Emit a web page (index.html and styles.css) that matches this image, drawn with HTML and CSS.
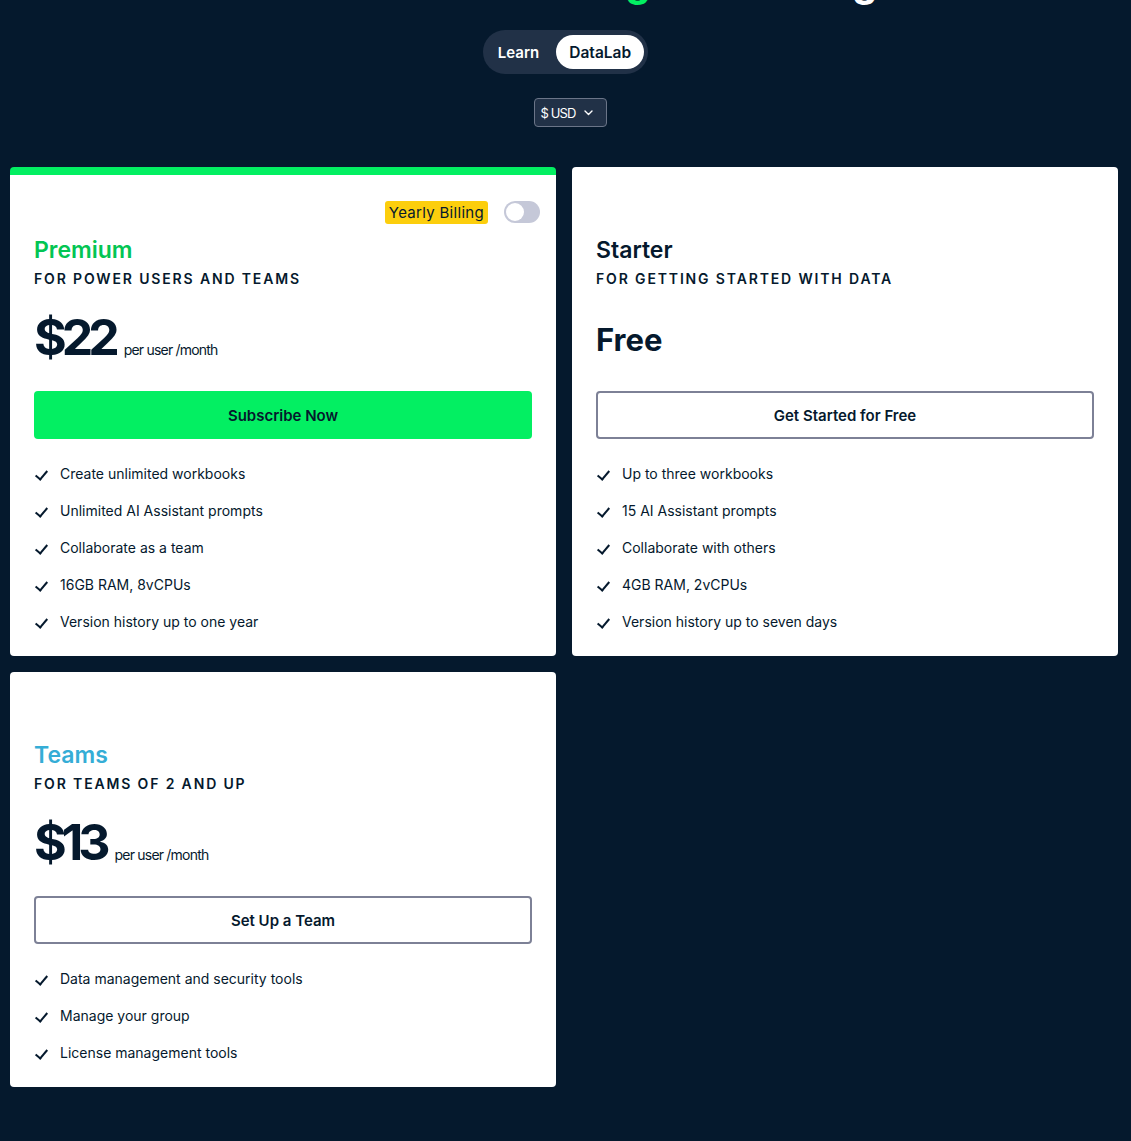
FILE: index.html
```html
<!DOCTYPE html>
<html lang="en">
<head>
    <meta charset="UTF-8">
    <meta name="viewport" content="width=device-width, initial-scale=1.0">
    <title>DataLab Pricing</title>
    <link rel="stylesheet" href="styles.css">
</head>
<body>
    <header class="top">
        <h1 class="title">Plans for all <span class="hl">learning</span> and coding</h1>
        <div class="product-switch">
            <button class="switch-btn">Learn</button>
            <button class="switch-btn active">DataLab</button>
        </div>
        <div class="currency">
            <span>$ USD</span>
            <svg width="9" height="6" viewBox="0 0 9 6"><path d="M1 1l3.5 3.5 3.5-3.5" fill="none" stroke="#fff" stroke-width="1.4" stroke-linecap="round" stroke-linejoin="round"/></svg>
        </div>
    </header>

    <main class="plans">
        <section class="card premium">
            <div class="billing">
                <span class="badge">Yearly Billing</span>
                <span class="toggle"><span class="knob"></span></span>
            </div>
            <h2 class="plan-name green">Premium</h2>
            <p class="plan-sub">For power users and teams</p>
            <div class="price">
                <span class="amount">$22</span>
                <span class="per">per user /month</span>
            </div>
            <button class="cta solid">Subscribe Now</button>
            <ul class="features">
                <li>Create unlimited workbooks</li>
                <li>Unlimited AI Assistant prompts</li>
                <li>Collaborate as a team</li>
                <li>16GB RAM, 8vCPUs</li>
                <li>Version history up to one year</li>
            </ul>
        </section>

        <section class="card">
            <div class="billing"></div>
            <h2 class="plan-name">Starter</h2>
            <p class="plan-sub">For getting started with data</p>
            <div class="price">
                <span class="amount free">Free</span>
            </div>
            <button class="cta outline">Get Started for Free</button>
            <ul class="features">
                <li>Up to three workbooks</li>
                <li>15 AI Assistant prompts</li>
                <li>Collaborate with others</li>
                <li>4GB RAM, 2vCPUs</li>
                <li>Version history up to seven days</li>
            </ul>
        </section>

        <section class="card">
            <div class="billing"></div>
            <h2 class="plan-name blue">Teams</h2>
            <p class="plan-sub">For teams of 2 and up</p>
            <div class="price">
                <span class="amount">$13</span>
                <span class="per">per user /month</span>
            </div>
            <button class="cta outline">Set Up a Team</button>
            <ul class="features">
                <li>Data management and security tools</li>
                <li>Manage your group</li>
                <li>License management tools</li>
            </ul>
        </section>
    </main>
</body>
</html>
```

FILE: styles.css
```css
body {
    margin: 0;
    background-color: #05192D;
    color: #05192D;
    font-family: Inter, "Noto Sans", sans-serif;
    overflow: hidden;
}
.top {
    display: flex;
    flex-direction: column;
    align-items: center;
}
.title {
    margin: -41px 0 0;
    height: 46px;
    color: #fff;
    font-size: 40px;
    line-height: 46px;
    font-weight: 700;
    white-space: nowrap;
}
.title .hl {
    color: #03EF62;
}
.product-switch {
    margin-top: 25px;
    display: flex;
    gap: 5px;
    padding: 5px 4px 5px 3px;
    background-color: #213147;
    border-radius: 22px;
}
.switch-btn {
    border: none;
    background: none;
    color: #fff;
    font-family: inherit;
    font-size: 15px;
    font-weight: 600;
    padding: 0 12px;
    height: 34px;
    border-radius: 17px;
}
.switch-btn.active {
    background-color: #fff;
    color: #05192D;
    padding: 0 13px;
    font-size: 15.5px;
}
.currency {
    margin-top: 24px;
    margin-left: 10px;
    display: flex;
    align-items: center;
    gap: 9px;
    height: 27px;
    padding: 0 13px 0 6px;
    background-color: #213147;
    border: 1px solid #6B7588;
    border-radius: 4px;
    color: #fff;
    font-size: 13px;
    letter-spacing: -0.9px;
}
.plans {
    display: grid;
    grid-template-columns: 546px 546px;
    gap: 16px;
    padding: 40px 10px 0;
}
.card {
    background-color: #fff;
    border-radius: 4px;
    padding: 8px 24px 16px;
}
.card.premium {
    border-top: 8px solid #03EF62;
    padding-top: 0;
}
.billing {
    height: 60px;
    box-sizing: border-box;
    padding-top: 14px;
    display: flex;
    justify-content: flex-end;
    align-items: center;
    gap: 16px;
}
.badge {
    background-color: #FCCE0D;
    border-radius: 3px;
    padding: 2px 4px;
    font-size: 15px;
    line-height: 19px;
    letter-spacing: 0.3px;
}
.toggle {
    width: 36px;
    height: 22px;
    border-radius: 11px;
    background-color: #C5C8D8;
    display: flex;
    align-items: center;
    padding-left: 2px;
    box-sizing: border-box;
    margin-right: -8px;
}
.knob {
    width: 18px;
    height: 18px;
    border-radius: 50%;
    background-color: #fff;
}
.plan-name {
    margin: 0;
    font-size: 23px;
    line-height: 30px;
    font-weight: 600;
}
.plan-name.green {
    color: #03C553;
}
.plan-name.blue {
    color: #35ADD6;
}
.plan-sub {
    margin: 5px 0 0;
    text-transform: uppercase;
    font-size: 14px;
    font-weight: 600;
    letter-spacing: 1.85px;
}
.price {
    display: flex;
    align-items: baseline;
    gap: 6px;
    margin-top: 20px;
    height: 56px;
}
.amount {
    font-size: 50px;
    font-weight: 700;
    letter-spacing: -5px;
    padding-right: 3px;
}
.amount.free {
    font-size: 31px;
    letter-spacing: 0;
    line-height: 66px;
}
.per {
    font-size: 14px;
    letter-spacing: -0.8px;
}
.cta {
    display: block;
    width: 100%;
    height: 48px;
    margin-top: 28px;
    border-radius: 4px;
    font-family: inherit;
    font-size: 15px;
    font-weight: 600;
    color: #05192D;
}
.cta.solid {
    background-color: #03EF62;
    border: none;
}
.cta.outline {
    background-color: #fff;
    border: 2px solid #7D8196;
}
.features {
    list-style: none;
    margin: 16px 0 0;
    padding: 0;
}
.features li {
    display: flex;
    align-items: center;
    height: 37px;
    font-size: 14px;
    padding-left: 26px;
    position: relative;
}
.features li::before {
    content: "";
    position: absolute;
    left: 4px;
    top: 13px;
    width: 5px;
    height: 10px;
    border-right: 2px solid #05192D;
    border-bottom: 2px solid #05192D;
    transform: rotate(40deg);
}
```
